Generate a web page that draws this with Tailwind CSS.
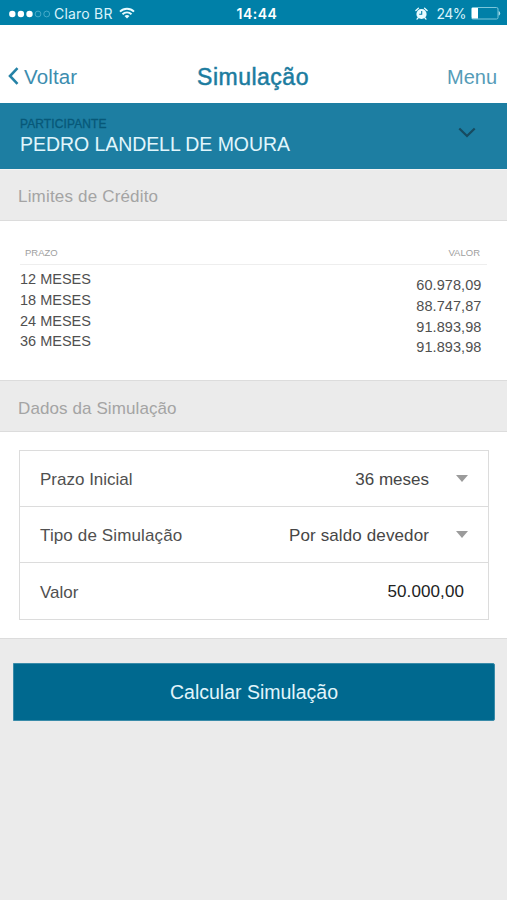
<!DOCTYPE html>
<html lang="pt-BR">
<head>
<meta charset="utf-8">
<title>Simulação</title>
<script src="https://cdn.jsdelivr.net/npm/@tailwindcss/browser@4"></script>
</head>
<body class="bg-[#ebebeb] font-['Liberation_Sans',Arial,sans-serif] text-[#505050]">
<div class="flex h-[900px] w-[507px] flex-col overflow-hidden whitespace-nowrap">
  <div class="grid h-[25px] shrink-0 grid-cols-3 items-center bg-[#0080a8] pt-[2px] pl-[9px] pr-[7px] font-[Inter,sans-serif] text-[14px] leading-[20px] text-[#d9f3fb]">
    <div class="flex items-center">
      <svg class="mr-[3px] shrink-0" width="42" height="8" viewBox="0 0 42 8"><g fill="#fff"><circle cx="3.3" cy="4" r="3.2"/><circle cx="11.9" cy="4" r="3.2"/><circle cx="20.5" cy="4" r="3.2"/></g><g fill="none" stroke="#58b5d0" stroke-width=".8"><circle cx="29" cy="4" r="2.9"/><circle cx="37.7" cy="4" r="2.9"/></g></svg>
      <span class="tracking-[0.2px]">Claro BR</span>
      <svg class="ml-[6px] mb-[2px] shrink-0" width="16" height="12" viewBox="0 0 16 12" fill="none" stroke="#e9fbff" stroke-width="1.9"><path d="M1 4.6a10 10 0 0 1 14 0M3.5 7.2a6.4 6.4 0 0 1 9 0"/><path d="M8 11.6 5.5 9.1a3.6 3.6 0 0 1 5 0z" fill="#e9fbff" stroke="none"/></svg>
    </div>
    <div class="pl-[5px] text-center text-[14px] font-semibold tracking-[0.5px] text-white">14:44</div>
    <div class="flex items-center justify-end">
      <svg class="mr-[8px] mb-px shrink-0" width="13" height="13" viewBox="0 0 13 13"><circle cx="6.5" cy="7" r="5.1" fill="#e9fbff"/><path d="M.9 3.5 3.4 1.2M12.1 3.5 9.6 1.2M3 11l-1 1.1M10 11l1 1.1" stroke="#e9fbff" stroke-width="1.3" stroke-linecap="round"/><path d="M6.7 3.9v3.4H4.2" fill="none" stroke="#0080a8" stroke-width="1.1"/></svg>
      <span class="tracking-[-0.5px]">24%</span>
      <svg class="-mr-px ml-[5px] shrink-0" width="30" height="13" viewBox="0 0 30 13"><rect x=".5" y=".5" width="26.5" height="11.5" rx="1.5" fill="none" stroke="#7bc7db"/><path d="M1 1h6v10.5H1z" fill="#fff"/><path d="M28 4.5q1.8 1.8 0 3.8z" fill="#c9eef7" stroke="#c9eef7" stroke-width=".5"/></svg>
    </div>
  </div>

  <header class="grid h-[78px] shrink-0 grid-cols-[1fr_auto_1fr] items-center bg-white pt-[26px] pl-[8px] pr-[10px] text-[20.5px] leading-[26px] text-[#3d8daf]">
    <a class="flex items-center"><svg class="mr-[5px] mb-[2px]" width="11" height="18" viewBox="0 0 11 18" fill="none" stroke="#2582a6" stroke-width="2.6"><path d="M9.5 1.2 2 9l7.5 7.8"/></svg><span class="tracking-[0.15px]">Voltar</span></a>
    <h1 class="pl-px text-[23px] text-[#1c7c9f] tracking-[0.5px] [-webkit-text-stroke:0.5px_#1c7c9f]">Simulação</h1>
    <a class="text-right text-[20px] text-[#559cb8]">Menu</a>
  </header>

  <section class="flex h-[66px] shrink-0 items-start justify-between bg-[#1d7ea2] pt-[14px] pl-[20px] pr-[31px]">
    <div>
      <div class="text-[12px] leading-[14px] text-[#075878] [-webkit-text-stroke:0.3px_#075878] tracking-[0.1px]">PARTICIPANTE</div>
      <div class="pt-px text-[19.5px] leading-[24px] tracking-[-0.06px] text-[#e1f6fc]">PEDRO LANDELL DE MOURA</div>
    </div>
    <svg class="mt-[10px]" width="18" height="12" viewBox="0 0 18 12" fill="none" stroke="#174b60" stroke-width="2.3"><path d="m1.3 1.5 7.7 7.5 7.7-7.5"/></svg>
  </section>

  <h2 class="flex h-[52px] shrink-0 items-center border-t border-b border-t-[#f4f4f4] border-b-[#dcdcdc] bg-[#ebebeb] pt-[3px] pl-[18px] text-[17px] tracking-[0.18px] text-[#a4a4a4]">Limites de Crédito</h2>

  <section class="h-[159px] shrink-0 bg-white px-[20px] pt-[25px]">
    <div class="flex h-[19px] justify-between border-b border-[#eeeeee] pl-[5px] pr-[7px] text-[9.5px] leading-[14px] text-[#a0a0a0]"><span>PRAZO</span><span>VALOR</span></div>
    <div class="flex justify-between pr-[5.5px] text-[14.5px] leading-[20.8px]">
      <ul class="pt-[4px]"><li>12 MESES</li><li>18 MESES</li><li>24 MESES</li><li>36 MESES</li></ul>
      <ul class="pt-[10px] text-right tracking-[0.08px]"><li>60.978,09</li><li>88.747,87</li><li>91.893,98</li><li>91.893,98</li></ul>
    </div>
  </section>

  <h2 class="flex h-[52px] shrink-0 items-center border-t border-b border-[#dcdcdc] bg-[#ebebeb] pt-[5px] pl-[18px] text-[17px] tracking-[0.1px] text-[#a4a4a4]">Dados da Simulação</h2>

  <section class="h-[206px] shrink-0 bg-white px-[19px] pt-[18px]">
    <div class="h-[170px] w-[470px] divide-y divide-[#dcdcdc] border border-[#dcdcdc] text-[17px] [&>div]:flex [&>div]:h-[56px] [&>div]:items-center [&>div]:pl-[20px]">
      <div class="pt-[3px]"><span class="grow">Prazo Inicial</span><span class="text-[#464646]">36 meses</span><svg class="ml-[27px] mr-[20px] mb-[4px]" width="12" height="7" viewBox="0 0 12 7"><path d="M0 0h12L6 7z" fill="#9b9b9b"/></svg></div>
      <div class="pt-[3px]"><span class="grow tracking-[0.13px]">Tipo de Simulação</span><span class="tracking-[0.12px] text-[#464646]">Por saldo devedor</span><svg class="ml-[27px] mr-[20px] mb-[4px]" width="12" height="7" viewBox="0 0 12 7"><path d="M0 0h12L6 7z" fill="#9b9b9b"/></svg></div>
      <div class="pt-[3px]"><span class="grow">Valor</span><span class="mr-[24px] mb-[2px] tracking-[0.1px] text-[#222]">50.000,00</span></div>
    </div>
  </section>

  <main class="grow border-t border-[#dcdcdc] px-[13px] pt-[24px]">
    <button class="flex h-[58px] w-[482px] items-center justify-center rounded-r-[2px] border border-[#398ba9] bg-[#00698f] pt-[2px] text-[19.5px] text-[#e1f5fb]">Calcular Simulação</button>
  </main>
</div>
</body>
</html>
